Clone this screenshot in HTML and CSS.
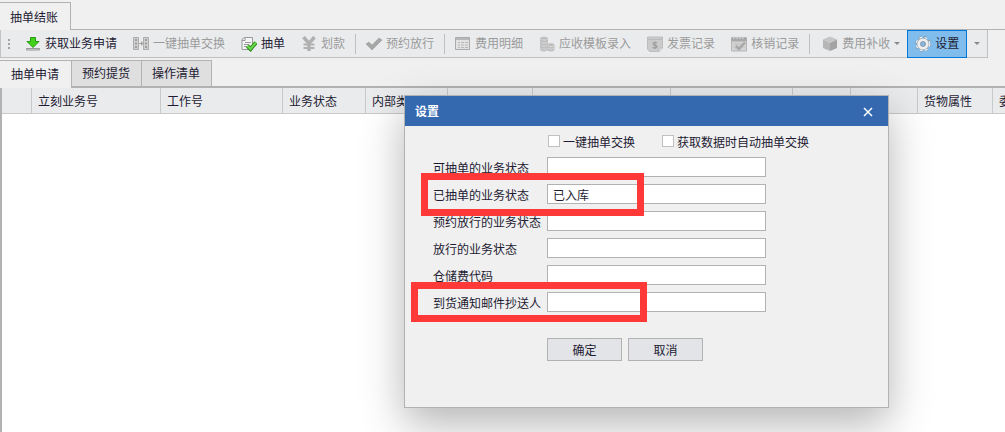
FILE: index.html
```html
<!DOCTYPE html>
<html lang="zh-CN">
<head>
    <meta charset="UTF-8">
    <meta name="viewport" content="width=device-width, initial-scale=1.0">
    <title>抽单结账</title>
    <link rel="stylesheet" href="styles.css">
</head>
<body>
    <div class="main-tabs">
        <button class="main-tab">抽单结账</button>
    </div>

    <div class="toolbar">
        <span class="grip"><i></i><i></i><i></i></span>
        <button class="tool">
            <svg class="icon" viewBox="0 0 16 16"><path d="M5.500 1.500h5v4H14L8 11.500 2 5.500h3.500z" fill="#43d21b" stroke="#249b10"/><path d="M1.500 12.500h13v1.500h-13z" fill="#ddd" stroke="#999"/></svg>
            获取业务申请
        </button>
        <button class="tool" disabled>
            <svg class="icon" viewBox="0 0 16 16"><path d="M.5 1.500h5v12h-5zM10.500 1.500h5v12h-5z" fill="#d0d0d0" stroke="#adadad"/><path d="M2 4h2M2 7.500h2M2 11h2M12 4h2M12 7.500h2M12 11h2" stroke="#a0a0a0" stroke-width="2"/><path d="M6 7.500h3" stroke="#a2a2a2"/><path d="M8 5l2.500 2.500L8 10z" fill="#a2a2a2"/></svg>
            一键抽单交换
        </button>
        <button class="tool">
            <svg class="icon" viewBox="0 0 16 16"><path d="M3.500 1.500h8v12h-10.500v-10z" fill="#f4f4f4" stroke="#999"/><path d="M1 4.500h3V1.500M4 6.500h6M3 8.500h5M3 10.500h3" fill="none" stroke="#999"/><path d="M6.500 10l3 3L15 6.500" fill="none" stroke="#2a8a18" stroke-width="4"/><path d="M6.500 10l3 3L15 6.500" fill="none" stroke="#69d84b" stroke-width="2"/></svg>
            抽单
        </button>
        <button class="tool" disabled>
            <svg class="icon" viewBox="0 0 16 16"><path d="M2.500 1l5.500 6.500L13.500 1M8 7v8" fill="none" stroke="#b1b1b1" stroke-width="3.500"/><path d="M2.500 8.500h11M2.500 12h11" stroke="#b1b1b1" stroke-width="2"/></svg>
            划款
        </button>
        <span class="sep"></span>
        <button class="tool" disabled>
            <svg class="icon" viewBox="0 0 16 16"><path d="M0 8l3-2 3 3 7-7 3 2L6 14z" fill="#a6a6a6" stroke="#989898" stroke-width=".5"/></svg>
            预约放行
        </button>
        <span class="sep"></span>
        <button class="tool" disabled>
            <svg class="icon" viewBox="0 0 16 16"><path d="M.5 1.500h14v12H.5z" fill="#e2e2e2" stroke="#aaa"/><path d="M1 3h13" stroke="#b8b8b8" stroke-width="2"/><path d="M3 6.500h2M6 6.500h3M10 6.500h3M3 9h2M6 9h3M10 9h3M3 11.500h2M6 11.500h3M10 11.500h3" stroke="#b8b8b8"/></svg>
            费用明细
        </button>
        <button class="tool" disabled>
            <svg class="icon" viewBox="0 0 16 16"><path d="M1 2.500v10.500c0 3.200 8 3.200 8 0V2.500C9 .3 1 .3 1 2.500zM8.500 9v4.500c0 2.500 7 2.500 7 0V9c0-2.300-7-2.300-7 0z" fill="#bebebe"/><path d="M1.500 3c1 1.600 6 1.600 7 0M1.500 6c1 1.600 6 1.600 7 0M1.500 9c1 1.600 6 1.600 7 0M1.500 12c1 1.600 5 1.600 6.500.5M9 9.500c1 1.500 5 1.500 6 0M9 12c1 1.500 5 1.500 6 0" fill="none" stroke="#dadada"/></svg>
            应收模板录入
        </button>
        <button class="tool" disabled>
            <svg class="icon" viewBox="0 0 16 16"><path d="M.5 1h15v11L12 15.500H2.500L.5 13z" fill="#cbcbcb" stroke="#bdbdbd"/><path d="M1 3.500h14" stroke="#bbb"/><path d="M12 15.500V12h3.500" fill="#e4e4e4" stroke="#bbb"/><path d="M10 7c-1-1-4-1-4 .8s4 1 4 2.800-3 1.800-4.500.8M8 5.500v7.500" fill="none" stroke="#a0a0a0" stroke-width="1.300"/></svg>
            发票记录
        </button>
        <button class="tool" disabled>
            <svg class="icon" viewBox="0 0 16 16"><path d="M.5 1.500h15v13.500H.5z" fill="#d4d4d4" stroke="#b5b5b5"/><path d="M.5 2h15v3.500H.5z" fill="#a8a8a8"/><path d="M3 0v3M6 0v3M9 0v3M12 0v3" stroke="#ddd"/><path d="M2 8h12M2 11h12M5 7v7M9 7v7" stroke="#c3c3c3"/><path d="M5 10l3 3L14 6.500" fill="none" stroke="#a8a8a8" stroke-width="2.500"/></svg>
            核销记录
        </button>
        <span class="sep"></span>
        <button class="tool has-arrow" disabled>
            <svg class="icon" viewBox="0 0 16 16"><path d="M8 .5l7 3L8 7 1 3.500z" fill="#c6c6c6"/><path d="M1 3.500L8 7v8l-7-3z" fill="#b6b6b6"/><path d="M15 3.500L8 7v8l7-3z" fill="#a4a4a4"/></svg>
            费用补收
            <span class="arrow"></span>
        </button>
        <button class="tool selected">
            <svg class="icon" viewBox="0 0 16 16"><circle cx="8" cy="8" r="6.500" fill="none" stroke="#8a99a8" stroke-width="3" stroke-dasharray="2.600 2.500"/><circle cx="8" cy="8" r="6.300" fill="none" stroke="#f4f4f4" stroke-width="2" stroke-dasharray="2.400 2.700"/><circle cx="8" cy="8" r="4.200" fill="none" stroke="#9ba8b5" stroke-width="4"/><circle cx="8" cy="8" r="4.200" fill="none" stroke="#eee" stroke-width="2.800"/><circle cx="8" cy="8" r="2.300" fill="#80bdec" stroke="#8a99a8"/></svg>
            设置
        </button>
        <button class="tool more" aria-label="更多"><span class="arrow"></span></button>
    </div>

    <div class="tabs">
        <button class="tab active">抽单申请</button>
        <button class="tab">预约提货</button>
        <button class="tab">操作清单</button>
    </div>

    <div class="grid">
        <table>
            <colgroup>
                <col class="w-mark"><col class="w-biz"><col class="w-job"><col class="w-state"><col class="w-type"><col class="w-goods"><col class="w-bill"><col class="w-job"><col class="w-short"><col class="w-name"><col class="w-attr"><col class="w-job">
            </colgroup>
            <thead>
                <tr>
                    <th></th><th>立刻业务号</th><th>工作号</th><th>业务状态</th><th>内部类型</th><th>特殊货物</th><th>主单号</th><th>分单号</th><th>件数</th><th>品名</th><th>货物属性</th><th>委</th>
                </tr>
            </thead>
        </table>
    </div>

    <form class="dialog">
        <div class="dialog-title">
            <span>设置</span>
            <button type="button" class="close" aria-label="关闭"><svg viewBox="0 0 10 10"><path d="M1 1l8 8M9 1L1 9" stroke="#fff" stroke-width="1.500"/></svg></button>
        </div>
        <div class="dialog-body">
            <div class="checks">
                <label><input type="checkbox">一键抽单交换</label>
                <label><input type="checkbox">获取数据时自动抽单交换</label>
            </div>
            <div class="row">
                <label for="canState">可抽单的业务状态</label>
                <input type="text" id="canState">
            </div>
            <div class="row">
                <label for="doneState">已抽单的业务状态</label>
                <input type="text" id="doneState" value="已入库">
            </div>
            <div class="row">
                <label for="bookState">预约放行的业务状态</label>
                <input type="text" id="bookState">
            </div>
            <div class="row">
                <label for="passState">放行的业务状态</label>
                <input type="text" id="passState">
            </div>
            <div class="row">
                <label for="feeCode">仓储费代码</label>
                <input type="text" id="feeCode">
            </div>
            <div class="row">
                <label for="mailCc">到货通知邮件抄送人</label>
                <input type="text" id="mailCc">
            </div>
            <div class="buttons">
                <button type="button" class="btn">确定</button>
                <button type="button" class="btn">取消</button>
            </div>
        </div>
        <div class="mark mark-state"></div>
        <div class="mark mark-mail"></div>
    </form>
</body>
</html>
```

FILE: styles.css
```css
* { box-sizing: border-box; }
body { margin: 0; height: 100vh; overflow: hidden; display: flex; flex-direction: column; position: relative; background: #f0f0f0; }
body, button, input { font-family: "Liberation Sans", "Noto Sans CJK SC", sans-serif; font-size: 12px; line-height: 18px; color: #1e1b33; }
button { margin: 0; padding: 0; cursor: pointer; white-space: nowrap; }

.main-tabs { flex: none; height: 30px; padding-top: 2px; border-bottom: 1px solid #b2b2b2; }
.main-tab { height: 28px; padding: 2px 12px 0 10px; border: 1px solid #b2b2b2; border-width: 1px 1px 0 0; background: #f0f0f0; }

.toolbar { flex: none; align-self: flex-start; display: flex; align-items: center; height: 28px; background: #e9ebed; border-bottom: 1px solid #bfc0c2; border-left: 1px solid #c4c4c4; }
.grip { width: 16px; padding-left: 7px; display: flex; flex-direction: column; gap: 2px; }
.grip i { width: 2px; height: 2px; background: #a2a2a6; }
.tool { display: flex; align-items: center; gap: 4px; height: 28px; padding: 0 8px; border: 0; background: none; }
.tool:disabled { color: #9b9b9b; }
.icon { width: 16px; height: 16px; flex: none; }
.sep { width: 1px; height: 20px; margin: 0 2px; background: #bfc0c2; }
.has-arrow { padding: 0 7px 0 10px; }
.arrow { border: 3px solid transparent; border-top-color: #88898d; border-bottom: 0; }
.selected { background: #80bdec; border: 1px solid #0078d7; padding: 0 7px; }
.more { width: 21px; padding: 0; justify-content: center; border-right: 1px solid #bfc0c2; }

.tabs { flex: none; display: flex; align-items: flex-end; height: 30px; padding-top: 2px; border-bottom: 2px solid #b2b2b2; }
.tab { height: 26px; padding: 0 11px 0 10px; border: 1px solid #b2b2b2; border-bottom: 0; border-left-width: 0; background: #dfdfdf; }
.tab.active { height: 28px; margin-bottom: -2px; padding: 0 12px 0 11px; background: #f0f0f0; }

.grid { flex: 1; overflow: hidden; background: #fff; border-left: 2px solid #b2b2b2; }
.grid table { table-layout: fixed; width: 1113px; border-spacing: 0; }
.grid th { height: 26px; padding: 2px 0 0 6px; background: #e9ebed; border-right: 1px solid #c8c9cb; border-bottom: 1px solid #c8c9cb; font-weight: normal; text-align: left; white-space: nowrap; }
.w-mark { width: 30px; }
.w-biz { width: 129px; }
.w-job { width: 122px; }
.w-state { width: 83px; }
.w-type { width: 82px; }
.w-goods { width: 85px; }
.w-bill { width: 138px; }
.w-short { width: 58px; }
.w-name { width: 67px; }
.w-attr { width: 75px; }

.dialog { position: absolute; left: 404px; top: 95px; width: 485px; margin: 0; background: #f0f0f0; border: 1px solid #b2b2b2; box-shadow: 0 16px 40px rgba(0, 0, 0, .29); }
.dialog-title { display: flex; align-items: center; justify-content: space-between; height: 30px; padding: 2px 14px 0 10px; background: #3469b0; color: #fff; font-weight: bold; }
.close { display: flex; align-items: center; justify-content: center; width: 12px; height: 18px; border: 0; background: none; }
.close svg { width: 10px; height: 10px; }
.dialog-body { padding: 8px 28px 46px; }
.checks { display: flex; gap: 27px; height: 18px; margin: 0 0 5px 115px; white-space: nowrap; }
.checks label { display: flex; gap: 3px; }
.checks input { appearance: none; width: 12px; height: 12px; margin: 1px 0 0; background: #fff; border: 1px solid #c0c0c0; }
.row { display: flex; margin-bottom: 7px; }
.row label { width: 114px; line-height: 24px; height: 20px; }
.row input { width: 219px; height: 20px; padding: 1px 5px 0; border: 1px solid #b2b2b2; background: #fff; outline: 0; }
.buttons { display: flex; gap: 6px; margin: 26px 0 0 114px; }
.btn { width: 75px; height: 23px; padding-top: 2px; border: 1px solid #b2b2b2; background: #e2e4e7; }

/* red frames around the two important settings */
.mark { position: absolute; border: 7px solid #ff3937; pointer-events: none; }
.mark-state { left: 16px; top: 77px; width: 223px; height: 43px; }
.mark-mail { left: 6px; top: 186px; width: 236px; height: 40px; }
```
